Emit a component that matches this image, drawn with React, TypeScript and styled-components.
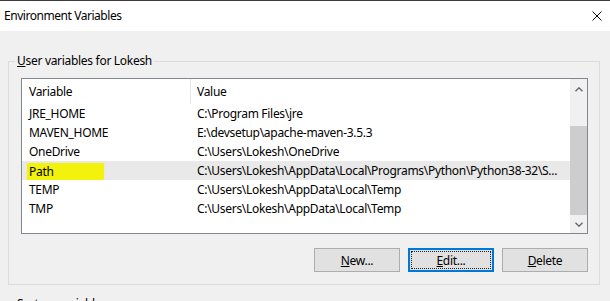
import React from "react";
import styled, { createGlobalStyle } from "styled-components";

const GlobalStyle = createGlobalStyle`
  html, body { margin: 0; padding: 0; background: #f0f0f0; overflow: hidden; }
  body {
    font-family: "Segoe UI", "Noto Sans", "Open Sans", sans-serif;
    font-size: 12px;
    color: #000;
  }
  * { box-sizing: border-box; }
`;

const Window = styled.div`
  width: 610px;
  height: 301px;
  overflow: hidden;
  border-top: 1px solid #3a3a3a;
  background: #f0f0f0;
`;

const TitleBar = styled.div`
  height: 30px;
  background: #fff;
  display: flex;
  align-items: center;
  justify-content: space-between;
  padding: 0 8px 0 4px;
`;

const Title = styled.span`
  line-height: 16px;
  letter-spacing: -0.45px;
`;

const Body = styled.div`
  padding: 23px 10px 0 8px;
`;

const Group = styled.fieldset`
  margin: 0;
  padding: 0;
  border: 1px solid #dcdcdc;
  min-width: 0;
`;

const Legend = styled.legend`
  margin-left: 6px;
  padding: 0 2px;
  line-height: 14px;
  letter-spacing: -0.3px;
`;

const GroupContent = styled.div`
  padding: 10px 11px 12px 12px;
`;

const ListBox = styled.div`
  height: 156px;
  border: 1px solid #828790;
  background: #fff;
  display: flex;
`;

const ListMain = styled.div`
  flex: 1;
  min-width: 0;
  display: flex;
  flex-direction: column;
`;

const Header = styled.div`
  height: 25px;
  display: flex;
  align-items: center;
`;

const HeaderCell = styled.div<{ $first?: boolean }>`
  height: 100%;
  display: flex;
  align-items: center;
  ${(p) =>
    p.$first
      ? `width: 169px; padding-left: 7px; border-right: 1px solid #e5e5e5;`
      : `flex: 1; padding-left: 6px;`}
  letter-spacing: -0.3px;
`;

const Row = styled.div<{ $selected?: boolean }>`
  height: 19px;
  display: flex;
  align-items: center;
  background: ${(p) => (p.$selected ? "#e9e9e9" : "transparent")};
`;

const Cell = styled.div<{ $first?: boolean }>`
  white-space: nowrap;
  overflow: hidden;
  line-height: 19px;
  letter-spacing: -0.3px;
  ${(p) =>
    p.$first
      ? `width: 169px; padding-left: 7px;`
      : `flex: 1; padding-left: 6px;`}
`;

const Marker = styled.span`
  display: inline-block;
  margin-left: -2px;
  padding-left: 2px;
  width: 77px;
  height: 17px;
  line-height: 17px;
  vertical-align: top;
  margin-top: 2px;
  background: #f2f20c;
  border-radius: 2px 1px 3px 1px;
  box-shadow: 0 0 1px #f2f20c;
`;

const ScrollBar = styled.div`
  width: 17px;
  background: #f0f0f0;
  display: flex;
  flex-direction: column;
`;

const Arrow = styled.div<{ $down?: boolean }>`
  height: 17px;
  flex: none;
  display: flex;
  align-items: center;
  justify-content: center;
  padding-top: ${(p) => (p.$down ? "0" : "3px")};
`;

const TrackGap = styled.div<{ $grow?: boolean }>`
  flex: ${(p) => (p.$grow ? "1" : "none")};
`;

const Thumb = styled.div`
  flex: none;
  background: #cdcdcd;
`;

const ButtonRow = styled.div`
  display: flex;
  justify-content: flex-end;
  gap: 8px;
  margin-top: 14px;
`;

const Button = styled.button<{ $focused?: boolean }>`
  position: relative;
  width: 86px;
  height: 24px;
  padding: 0;
  font: inherit;
  letter-spacing: -0.3px;
  color: #000;
  background: #e1e1e1;
  border: 1px solid ${(p) => (p.$focused ? "#0078d7" : "#adadad")};
  box-shadow: ${(p) => (p.$focused ? "inset 0 0 0 1px #0078d7" : "none")};
  ${(p) =>
    p.$focused
      ? `&::after {
          content: "";
          position: absolute;
          inset: 2px;
          border: 1px dotted #222;
        }`
      : ""}
`;

const SectionLabel = styled.div`
  margin-top: 11px;
  padding-left: 9px;
  line-height: 16px;
  letter-spacing: -0.3px;
`;

const rows: { name: string; value: string }[] = [
  { name: "JRE_HOME", value: "C:\\Program Files\\jre" },
  { name: "MAVEN_HOME", value: "E:\\devsetup\\apache-maven-3.5.3" },
  { name: "OneDrive", value: "C:\\Users\\Lokesh\\OneDrive" },
  {
    name: "Path",
    value: "C:\\Users\\Lokesh\\AppData\\Local\\Programs\\Python\\Python38-32\\S...",
  },
  { name: "TEMP", value: "C:\\Users\\Lokesh\\AppData\\Local\\Temp" },
  { name: "TMP", value: "C:\\Users\\Lokesh\\AppData\\Local\\Temp" },
];

const Chevron = ({ down }: { down?: boolean }) => (
  <svg width="8" height="5" viewBox="0 0 8 5">
    <path
      d={down ? "M0.5 0.8 L4 4.2 L7.5 0.8" : "M0.5 4.2 L4 0.8 L7.5 4.2"}
      fill="none"
      stroke="#606060"
      strokeWidth="1.3"
    />
  </svg>
);

export default function App() {
  return (
    <>
      <GlobalStyle />
      <Window>
        <TitleBar>
          <Title>Environment Variables</Title>
          <svg width="10" height="10" viewBox="0 0 10 10">
            <path d="M0.5 0.5 L9.5 9.5 M9.5 0.5 L0.5 9.5" stroke="#111" strokeWidth="1" />
          </svg>
        </TitleBar>
        <Body>
          <Group>
            <Legend>
              <u>U</u>ser variables for Lokesh
            </Legend>
            <GroupContent>
              <ListBox>
                <ListMain>
                  <Header>
                    <HeaderCell $first>Variable</HeaderCell>
                    <HeaderCell>Value</HeaderCell>
                  </Header>
                  {rows.map((r) => (
                    <Row key={r.name} $selected={r.name === "Path"}>
                      <Cell $first>
                        {r.name === "Path" ? <Marker>{r.name}</Marker> : r.name}
                      </Cell>
                      <Cell>{r.value}</Cell>
                    </Row>
                  ))}
                </ListMain>
                <ScrollBar>
                  <Arrow>
                    <Chevron />
                  </Arrow>
                  <TrackGap style={{ height: 30 }} />
                  <Thumb style={{ height: 89 }} />
                  <TrackGap $grow />
                  <Arrow $down>
                    <Chevron down />
                  </Arrow>
                </ScrollBar>
              </ListBox>
              <ButtonRow>
                <Button>
                  <u>N</u>ew...
                </Button>
                <Button $focused>
                  <u>E</u>dit...
                </Button>
                <Button>
                  <u>D</u>elete
                </Button>
              </ButtonRow>
            </GroupContent>
          </Group>
          <SectionLabel>
            <u>S</u>ystem variables
          </SectionLabel>
        </Body>
      </Window>
    </>
  );
}
